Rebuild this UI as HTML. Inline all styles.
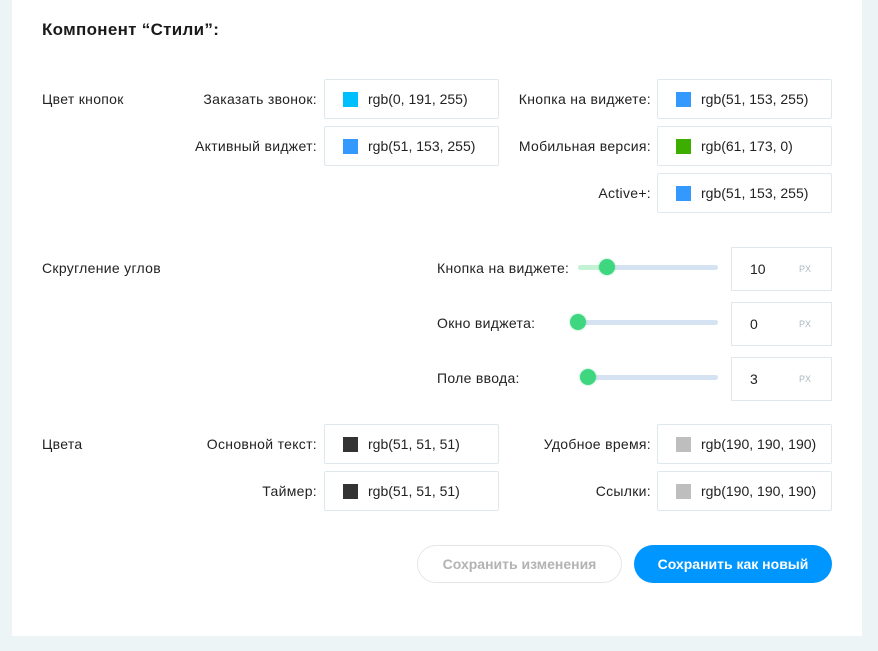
<!DOCTYPE html>
<html><head><meta charset="utf-8"><style>
*{margin:0;padding:0;box-sizing:border-box}
body{width:878px;height:651px;background:#edf4f6;font-family:"Liberation Sans",sans-serif;color:#222;position:relative;overflow:hidden}
.panel{position:absolute;left:12px;top:0;width:850px;height:636px;background:#fff}
.a{position:absolute;font-size:14px;letter-spacing:0.3px;white-space:nowrap}
.r{text-align:right}
.box{position:absolute;width:175px;height:40px;border:1px solid #dfe8ec;border-radius:2px;background:#fff}
.box .sw{position:absolute;left:18px;top:12px;width:15px;height:15px}
.box .t{position:absolute;left:43px;top:11px;font-size:14px;color:#222}
.pbox{position:absolute;left:731px;width:101px;height:44px;border:1px solid #dfe8ec}
.pbox .v{position:absolute;left:18px;top:13px;font-size:14px}
.pbox .u{position:absolute;left:67px;top:16px;font-size:9px;color:#a9b8c0}
.track{position:absolute;height:5px;background:#d5e2f1;border-radius:3px}
.thumb{position:absolute;width:16px;height:16px;border-radius:50%;background:#3fd680;box-shadow:0 0 2px rgba(63,214,128,.6)}
.btn{position:absolute;top:545px;height:38px;border-radius:19px;font-size:14px;font-weight:bold;text-align:center;line-height:38px}
</style></head><body>
<div class="panel"></div>
<div class="a" style="left:42px;top:20px;font-size:17px;font-weight:bold;color:#1a1a1a;letter-spacing:0.3px">Компонент “Стили”:</div>

<div class="a" style="left:42px;top:91px">Цвет кнопок</div>
<div class="a r" style="left:150px;width:167px;top:91px">Заказать звонок:</div>
<div class="box" style="left:324px;top:79px"><div class="sw" style="background:#00bfff"></div><div class="t">rgb(0, 191, 255)</div></div>
<div class="a r" style="left:150px;width:167px;top:138px">Активный виджет:</div>
<div class="box" style="left:324px;top:126px"><div class="sw" style="background:#3399ff"></div><div class="t">rgb(51, 153, 255)</div></div>

<div class="a r" style="left:480px;width:171px;top:91px">Кнопка на виджете:</div>
<div class="box" style="left:657px;top:79px"><div class="sw" style="background:#3399ff"></div><div class="t">rgb(51, 153, 255)</div></div>
<div class="a r" style="left:480px;width:171px;top:138px">Мобильная версия:</div>
<div class="box" style="left:657px;top:126px"><div class="sw" style="background:#3dad00"></div><div class="t">rgb(61, 173, 0)</div></div>
<div class="a r" style="left:480px;width:171px;top:185px">Active+:</div>
<div class="box" style="left:657px;top:173px"><div class="sw" style="background:#3399ff"></div><div class="t">rgb(51, 153, 255)</div></div>

<div class="a" style="left:42px;top:260px">Скругление углов</div>
<div class="a" style="left:437px;top:260px">Кнопка на виджете:</div>
<div class="track" style="left:578px;width:140px;top:265px"></div>
<div class="track" style="left:578px;width:29px;top:265px;background:#c4f2d5"></div>
<div class="thumb" style="left:599px;top:259px"></div>
<div class="pbox" style="top:247px"><div class="v">10</div><div class="u">PX</div></div>

<div class="a" style="left:437px;top:315px">Окно виджета:</div>
<div class="track" style="left:578px;width:140px;top:320px"></div>
<div class="thumb" style="left:570px;top:314px"></div>
<div class="pbox" style="top:302px"><div class="v">0</div><div class="u">PX</div></div>

<div class="a" style="left:437px;top:370px">Поле ввода:</div>
<div class="track" style="left:588px;width:130px;top:375px"></div>
<div class="thumb" style="left:580px;top:369px"></div>
<div class="pbox" style="top:357px"><div class="v">3</div><div class="u">PX</div></div>

<div class="a" style="left:42px;top:436px">Цвета</div>
<div class="a r" style="left:150px;width:167px;top:436px">Основной текст:</div>
<div class="box" style="left:324px;top:424px"><div class="sw" style="background:#333"></div><div class="t">rgb(51, 51, 51)</div></div>
<div class="a r" style="left:150px;width:167px;top:483px">Таймер:</div>
<div class="box" style="left:324px;top:471px"><div class="sw" style="background:#333"></div><div class="t">rgb(51, 51, 51)</div></div>
<div class="a r" style="left:480px;width:171px;top:436px">Удобное время:</div>
<div class="box" style="left:657px;top:424px"><div class="sw" style="background:#bebebe"></div><div class="t">rgb(190, 190, 190)</div></div>
<div class="a r" style="left:480px;width:171px;top:483px">Ссылки:</div>
<div class="box" style="left:657px;top:471px"><div class="sw" style="background:#bebebe"></div><div class="t">rgb(190, 190, 190)</div></div>

<div class="btn" style="left:417px;width:205px;border:1px solid #e3e6e8;color:#b3b3b3;line-height:36px">Сохранить изменения</div>
<div class="btn" style="left:634px;width:198px;background:#0096ff;color:#fff">Сохранить как новый</div>
</body></html>
